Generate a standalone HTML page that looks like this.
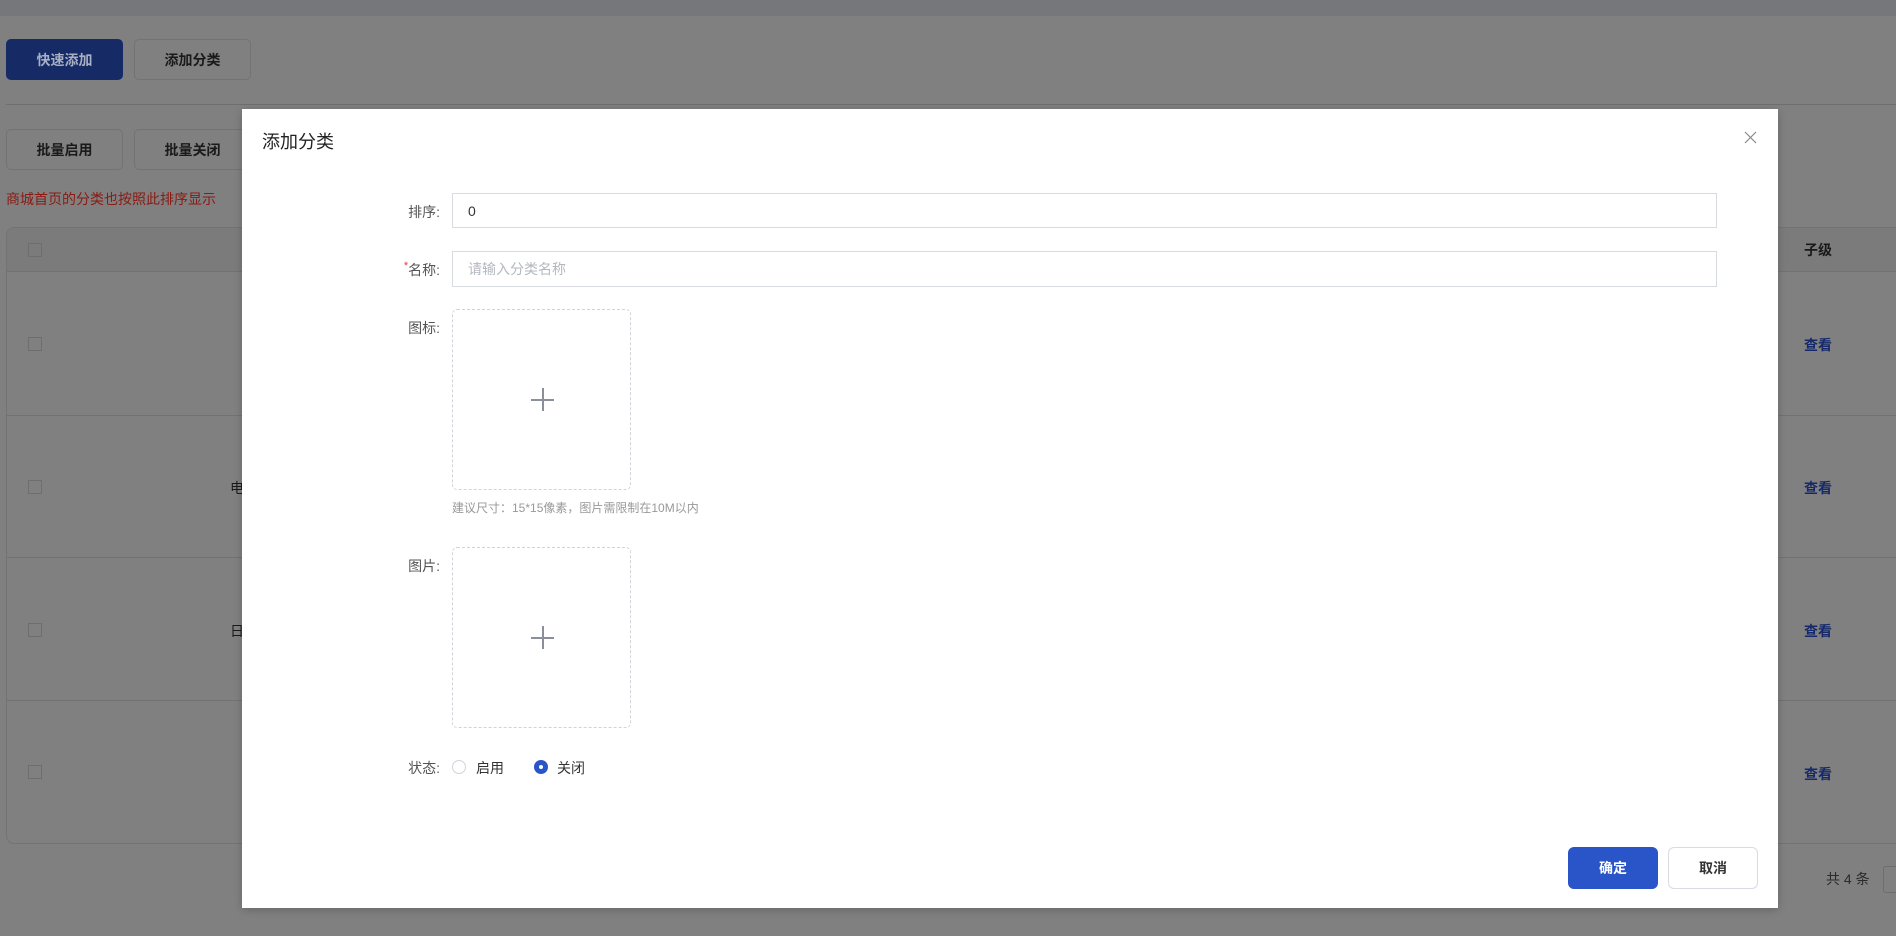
<!DOCTYPE html>
<html><head><meta charset="utf-8"><style>
*{box-sizing:border-box;margin:0;padding:0}
body{width:1896px;height:936px;overflow:hidden;background:#808080;font-family:"Liberation Sans","Noto Sans CJK SC",sans-serif;position:relative;color:#333}
.a{position:absolute}
.btn{position:absolute;border:1px solid #737373;border-radius:5px;background:#808080;color:#1a1a1a;font-size:14px;font-weight:bold;display:flex;align-items:center;justify-content:center}
.cb{position:absolute;left:28px;width:14px;height:14px;border:1px solid #6e6e6e}
.look{position:absolute;left:1804px;color:#15296a;font-size:14px;font-weight:bold}
.lbl{position:absolute;right:1456px;font-size:14px;color:#555;text-align:right}
.inp{position:absolute;left:452px;width:1265px;border:1px solid #d9dbe3;font-size:14px;padding-left:15px;display:flex;align-items:center}
.up{position:absolute;left:452px;width:179px;height:181px;border:1px dashed #d0d3da;border-radius:5px}
.up:before{content:"";position:absolute;left:78px;top:89px;width:23px;height:2px;background:#8a8f9a}
.up:after{content:"";position:absolute;left:89px;top:78px;width:2px;height:23px;background:#8a8f9a}
</style></head><body>
<div class="a" style="left:0;top:0;width:1896px;height:16px;background:#76777a"></div>
<div class="btn" style="left:6px;top:39px;width:117px;height:41px;background:#162a66;border-color:#162a66;color:#a9b0c4">快速添加</div>
<div class="btn" style="left:134px;top:39px;width:117px;height:41px">添加分类</div>
<div class="a" style="left:6px;top:104px;width:1890px;height:1px;background:#6e6e6e"></div>
<div class="btn" style="left:6px;top:129px;width:117px;height:41px">批量启用</div>
<div class="btn" style="left:134px;top:129px;width:117px;height:41px">批量关闭</div>
<div class="a" style="left:6px;top:189px;font-size:14px;color:#8a1a12">商城首页的分类也按照此排序显示</div>
<div class="a" style="left:6px;top:227px;width:1900px;height:617px;border:1px solid #737373;border-radius:8px"></div>
<div class="a" style="left:7px;top:228px;width:1890px;height:44px;background:#7b7b7b;border-bottom:1px solid #727272;border-radius:8px 0 0 0"></div>
<div class="a" style="left:7px;top:415px;width:1890px;height:1px;background:#727272"></div>
<div class="a" style="left:7px;top:557px;width:1890px;height:1px;background:#727272"></div>
<div class="a" style="left:7px;top:700px;width:1890px;height:1px;background:#727272"></div>
<div class="cb" style="top:243px"></div><div class="cb" style="top:337px"></div><div class="cb" style="top:480px"></div><div class="cb" style="top:623px"></div><div class="cb" style="top:765px"></div>
<div class="a" style="left:230px;top:478px;font-size:14px;color:#1a1a1a">电</div>
<div class="a" style="left:230px;top:621px;font-size:14px;color:#1a1a1a">日</div>
<div class="a" style="left:1804px;top:240px;font-size:14px;font-weight:bold;color:#1a1a1a">子级</div>
<div class="look" style="top:335px">查看</div><div class="look" style="top:478px">查看</div><div class="look" style="top:621px">查看</div><div class="look" style="top:764px">查看</div>
<div class="a" style="left:1826px;top:869px;font-size:14px;color:#2a2a2a">共 4 条</div>
<div class="a" style="left:1883px;top:866px;width:30px;height:27px;border:1px solid #6e6e6e;border-radius:3px"></div>

<div class="a" style="left:242px;top:109px;width:1536px;height:799px;background:#fff;box-shadow:0 2px 8px rgba(0,0,0,.2)">
</div>
<div class="a" style="left:262px;top:128px;font-size:18px;color:#222">添加分类</div>
<svg class="a" style="left:1744px;top:131px" width="13" height="13" viewBox="0 0 13 13"><path d="M1 1L12 12M12 1L1 12" stroke="#888" stroke-width="1.2"/></svg>
<div class="lbl" style="top:202px">排序:</div>
<div class="inp" style="top:193px;height:35px;color:#333">0</div>
<div class="lbl" style="top:260px"><span style="color:#e33;font-size:11px;vertical-align:top">*</span>名称:</div>
<div class="inp" style="top:251px;height:36px;color:#b4b7bf">请输入分类名称</div>
<div class="lbl" style="top:318px">图标:</div>
<div class="up" style="top:309px"></div>
<div class="a" style="left:452px;top:499px;font-size:12px;color:#999">建议尺寸：15*15像素，图片需限制在10M以内</div>
<div class="lbl" style="top:556px">图片:</div>
<div class="up" style="top:547px"></div>
<div class="lbl" style="top:758px">状态:</div>
<div class="a" style="left:452px;top:760px;width:14px;height:14px;border:1px solid #d0d3da;border-radius:50%"></div>
<div class="a" style="left:476px;top:758px;font-size:14px;color:#333">启用</div>
<div class="a" style="left:534px;top:760px;width:14px;height:14px;border-radius:50%;background:#2a55c8"><div class="a" style="left:5px;top:5px;width:4px;height:4px;border-radius:50%;background:#fff"></div></div>
<div class="a" style="left:557px;top:758px;font-size:14px;color:#333">关闭</div>
<div class="a" style="left:1568px;top:847px;width:90px;height:42px;border-radius:6px;background:#2a55c8;color:#fff;font-size:14px;font-weight:bold;display:flex;align-items:center;justify-content:center">确定</div>
<div class="a" style="left:1668px;top:847px;width:90px;height:42px;border-radius:6px;border:1px solid #d9dbe3;color:#333;font-size:14px;font-weight:bold;display:flex;align-items:center;justify-content:center">取消</div>
</body></html>
